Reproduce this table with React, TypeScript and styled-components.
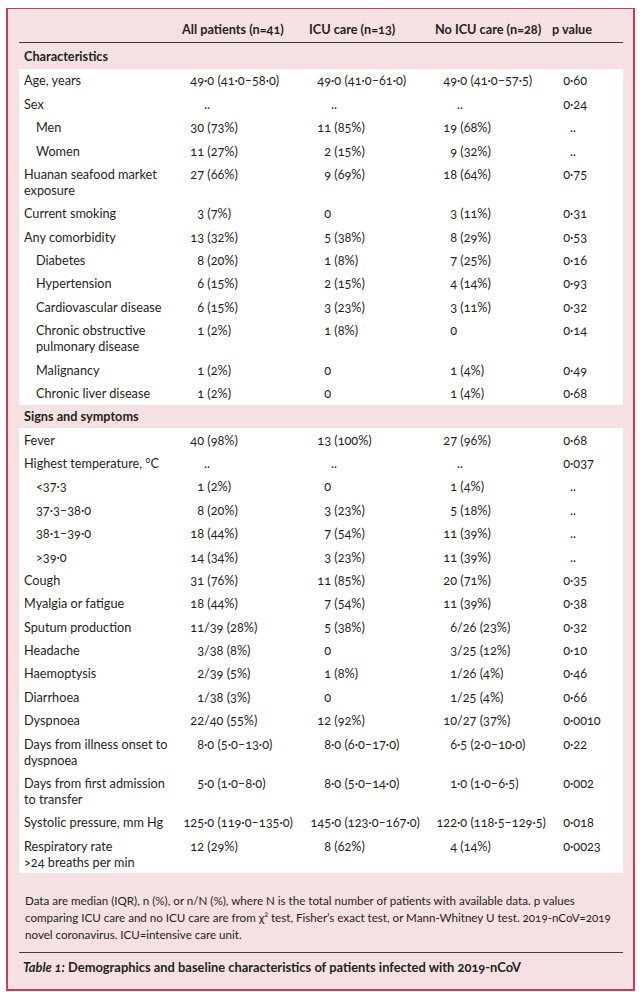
import React from "react";
import styled, { createGlobalStyle } from "styled-components";

const GlobalStyle = createGlobalStyle`
  html, body {
    margin: 0;
    padding: 0;
    background: #ffffff;
  }
  body {
    font-family: Lato, "Liberation Sans", sans-serif;
    color: #231f20;
  }
`;

const Frame = styled.div`
  box-sizing: border-box;
  width: 629px;
  height: 983px;
  margin: 8px 0 0 6px;
  padding: 0 10px 0 11px;
  background: #f5e1e1;
  border: 2px solid #c93a5f;
  border-top-width: 1px;
`;

const Table = styled.table`
  width: 604px;
  table-layout: fixed;
  border-collapse: collapse;
  font-size: 12.7px;
  line-height: 16px;
  font-variant-numeric: oldstyle-nums;
`;

const HeadCell = styled.th`
  padding: 12px 0 5px 6px;
  text-align: left;
  font-weight: 700;
  white-space: nowrap;
  border-bottom: 1px solid #3c3c3c;
`;

const SectionCell = styled.td<{ $first?: boolean }>`
  padding: ${(p) => (p.$first ? "5.3px 0 4.5px 5px" : "3.7px 0 3.7px 5px")};
  font-weight: 700;
`;

const BodyRow = styled.tr`
  background: #ffffff;
`;

const LabelCell = styled.td<{ $indent?: boolean }>`
  padding: 3.7px 0 3.7px ${(p) => (p.$indent ? 17 : 5)}px;
  vertical-align: top;
  white-space: nowrap;
`;

const ValueCell = styled.td`
  padding: 3.7px 0 3.7px 6px;
  vertical-align: top;
  white-space: nowrap;
`;

const Lead = styled.span<{ $w: number }>`
  display: inline-block;
  min-width: ${(p) => p.$w}px;
  text-align: right;
`;

const Notes = styled.p`
  margin: 19.5px 0 0;
  padding-left: 6px;
  font-size: 11.6px;
  line-height: 16.8px;
  white-space: nowrap;
  font-variant-numeric: oldstyle-nums;

  sup {
    font-size: 7px;
    line-height: 0;
  }
`;

const Caption = styled.div`
  margin-top: 9px;
  border-top: 1px solid #3c3c3c;
  padding: 5.5px 0 0 4px;
  font-size: 12.9px;
  line-height: 17px;
  font-weight: 700;
  font-variant-numeric: oldstyle-nums;

  em {
    font-style: italic;
  }
`;

type Row = {
  label: string[];
  sub?: boolean;
  values: [string, string, string, string];
};

type Section = { title: string; rows: Row[] };

const sections: Section[] = [
  {
    title: "Characteristics",
    rows: [
      { label: ["Age, years"], values: ["49·0 (41·0–58·0)", "49·0 (41·0–61·0)", "49·0 (41·0–57·5)", "0·60"] },
      { label: ["Sex"], values: ["..", "..", "..", "0·24"] },
      { label: ["Men"], sub: true, values: ["30 (73%)", "11 (85%)", "19 (68%)", ".."] },
      { label: ["Women"], sub: true, values: ["11 (27%)", "2 (15%)", "9 (32%)", ".."] },
      { label: ["Huanan seafood market", "exposure"], values: ["27 (66%)", "9 (69%)", "18 (64%)", "0·75"] },
      { label: ["Current smoking"], values: ["3 (7%)", "0", "3 (11%)", "0·31"] },
      { label: ["Any comorbidity"], values: ["13 (32%)", "5 (38%)", "8 (29%)", "0·53"] },
      { label: ["Diabetes"], sub: true, values: ["8 (20%)", "1 (8%)", "7 (25%)", "0·16"] },
      { label: ["Hypertension"], sub: true, values: ["6 (15%)", "2 (15%)", "4 (14%)", "0·93"] },
      { label: ["Cardiovascular disease"], sub: true, values: ["6 (15%)", "3 (23%)", "3 (11%)", "0·32"] },
      { label: ["Chronic obstructive", "pulmonary disease"], sub: true, values: ["1 (2%)", "1 (8%)", "0", "0·14"] },
      { label: ["Malignancy"], sub: true, values: ["1 (2%)", "0", "1 (4%)", "0·49"] },
      { label: ["Chronic liver disease"], sub: true, values: ["1 (2%)", "0", "1 (4%)", "0·68"] },
    ],
  },
  {
    title: "Signs and symptoms",
    rows: [
      { label: ["Fever"], values: ["40 (98%)", "13 (100%)", "27 (96%)", "0·68"] },
      { label: ["Highest temperature, °C"], values: ["..", "..", "..", "0·037"] },
      { label: ["<37·3"], sub: true, values: ["1 (2%)", "0", "1 (4%)", ".."] },
      { label: ["37·3–38·0"], sub: true, values: ["8 (20%)", "3 (23%)", "5 (18%)", ".."] },
      { label: ["38·1–39·0"], sub: true, values: ["18 (44%)", "7 (54%)", "11 (39%)", ".."] },
      { label: [">39·0"], sub: true, values: ["14 (34%)", "3 (23%)", "11 (39%)", ".."] },
      { label: ["Cough"], values: ["31 (76%)", "11 (85%)", "20 (71%)", "0·35"] },
      { label: ["Myalgia or fatigue"], values: ["18 (44%)", "7 (54%)", "11 (39%)", "0·38"] },
      { label: ["Sputum production"], values: ["11/39 (28%)", "5 (38%)", "6/26 (23%)", "0·32"] },
      { label: ["Headache"], values: ["3/38 (8%)", "0", "3/25 (12%)", "0·10"] },
      { label: ["Haemoptysis"], values: ["2/39 (5%)", "1 (8%)", "1/26 (4%)", "0·46"] },
      { label: ["Diarrhoea"], values: ["1/38 (3%)", "0", "1/25 (4%)", "0·66"] },
      { label: ["Dyspnoea"], values: ["22/40 (55%)", "12 (92%)", "10/27 (37%)", "0·0010"] },
      { label: ["Days from illness onset to", "dyspnoea"], values: ["8·0 (5·0–13·0)", "8·0 (6·0–17·0)", "6·5 (2·0–10·0)", "0·22"] },
      { label: ["Days from first admission", "to transfer"], values: ["5·0 (1·0–8·0)", "8·0 (5·0–14·0)", "1·0 (1·0–6·5)", "0·002"] },
      { label: ["Systolic pressure, mm Hg"], values: ["125·0 (119·0–135·0)", "145·0 (123·0–167·0)", "122·0 (118·5–129·5)", "0·018"] },
      { label: ["Respiratory rate", ">24 breaths per min"], values: ["12 (29%)", "8 (62%)", "4 (14%)", "0·0023"] },
    ],
  },
];

const columns = [
  { title: "", width: 157 },
  { title: "All patients (n=41)", width: 127 },
  { title: "ICU care (n=13)", width: 126 },
  { title: "No ICU care (n=28)", width: 117 },
  { title: "p value", width: 77 },
];

// right-align the whole-number part so the figures line up on it
const Value = ({ text, lead }: { text: string; lead: number }) => {
  const m = text.match(/^(\d+)(.*)$/);
  const head = m ? m[1] : "";
  const rest = m ? m[2] : text;
  return (
    <ValueCell>
      <Lead $w={lead}>{head}</Lead>
      {rest}
    </ValueCell>
  );
};

const App = () => (
  <>
    <GlobalStyle />
    <Frame>
      <Table>
        <colgroup>
          {columns.map((c, i) => (
            <col key={i} style={{ width: c.width }} />
          ))}
        </colgroup>
        <thead>
          <tr>
            {columns.map((c, i) => (
              <HeadCell key={i}>{c.title}</HeadCell>
            ))}
          </tr>
        </thead>
        {sections.map((s, si) => (
          <tbody key={s.title}>
            <tr>
              <SectionCell colSpan={5} $first={si === 0}>
                {s.title}
              </SectionCell>
            </tr>
            {s.rows.map((r) => (
              <BodyRow key={r.label.join(" ")}>
                <LabelCell $indent={r.sub}>
                  {r.label.map((l, li) => (
                    <React.Fragment key={li}>
                      {li > 0 && <br />}
                      {l}
                    </React.Fragment>
                  ))}
                </LabelCell>
                {r.values.map((v, vi) => (
                  <Value key={vi} text={v} lead={vi === 3 ? 18 : 22} />
                ))}
              </BodyRow>
            ))}
          </tbody>
        ))}
      </Table>
      <Notes>
        Data are median (IQR), n (%), or n/N (%), where N is the total number of patients with available data. p values
        <br />
        comparing ICU care and no ICU care are from χ<sup>2</sup> test, Fisher’s exact test, or Mann-Whitney U test.
        2019-nCoV=2019
        <br />
        novel coronavirus. ICU=intensive care unit.
      </Notes>
      <Caption>
        <em>Table 1:</em> Demographics and baseline characteristics of patients infected with 2019-nCoV
      </Caption>
    </Frame>
  </>
);

export default App;
